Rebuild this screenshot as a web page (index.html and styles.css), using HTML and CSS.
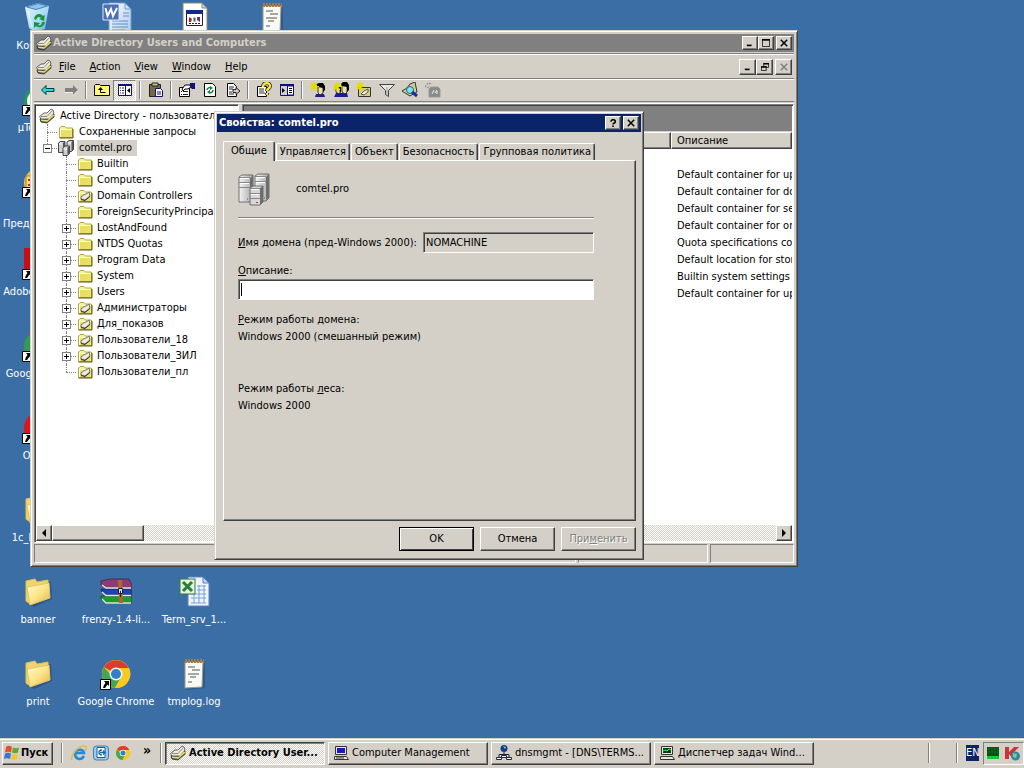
FILE: index.html
```html
<!DOCTYPE html>
<html lang="ru">
<head>
<meta charset="utf-8">
<title>Active Directory Users and Computers</title>
<link rel="stylesheet" href="styles.css">
</head>
<body>
<svg class="sprites" aria-hidden="true">
  <defs>
    <linearGradient id="g-folder" x1="0" y1="0" x2="1" y2="1"><stop offset="0" stop-color="#fffbd0"/><stop offset=".5" stop-color="#fbe58a"/><stop offset="1" stop-color="#e2b545"/></linearGradient>
    <linearGradient id="g-bin" x1="0" y1="0" x2="1" y2="1"><stop offset="0" stop-color="#e8f8ff"/><stop offset=".6" stop-color="#a8daf4"/><stop offset="1" stop-color="#5aa6da"/></linearGradient>
    <linearGradient id="g-page" x1="0" y1="0" x2="1" y2="1"><stop offset="0" stop-color="#fff"/><stop offset="1" stop-color="#a9c8ee"/></linearGradient>
    <linearGradient id="g-srv" x1="0" y1="0" x2="1" y2="0"><stop offset="0" stop-color="#f4f4f4"/><stop offset="1" stop-color="#a8a8a8"/></linearGradient>
  </defs>
  <symbol id="i-shortcut" viewBox="0 0 11 11"><path fill="#fff" stroke="#000" d="M.5.5h10v10H.5z"/><path d="M4 2h5v5L7.500 5.500 5 9H3l1-3 1.500-2z"/></symbol>
  <symbol id="i-bin" viewBox="0 0 32 32"><path d="M3 5l13-4 11 3-4 23-10 3-6-4z" fill="url(#g-bin)"/><path d="M3 5l13-4 11 3-13 4z" fill="#3f7fb2"/><path d="M6 5l10-3 8 2-10 3z" fill="#8ec6e8"/><path d="M6 9l4 16" stroke="#fff" opacity=".7"/><path d="M12 17c1-6 7-6 9-3l2-1-1 6-5-2 2-1c-2-2-4-1-5 2zM23 20c-1 6-7 6-9 4l-2 2v-6l6 1-2 2c2 1 4 0 4-3z" fill="#199338"/></symbol>
  <symbol id="i-word" viewBox="0 0 32 32"><path d="M9 1h16l6 6v25H9z" fill="url(#g-page)" stroke="#7399cf"/><path d="M25 1v6h6z" fill="#cfe0f6" stroke="#7399cf"/><path d="M12 19h16M12 22h16M12 25h16M12 28h13M23 11h6M23 14h6" stroke="#6d8cc4"/><path d="M3 2h16v16H3z" fill="#4a6fb8" stroke="#dbe6f8"/><path d="M5.500 6l2 8L11 7l2 7 4-8" fill="none" stroke="#fff" stroke-width="2"/></symbol>
  <symbol id="i-reg" viewBox="0 0 32 32"><path d="M5 1h19l5 5v26H5z" fill="#fff" stroke="#8a8a80"/><path d="M24 1v5h5z" fill="#ccc" stroke="#888"/><path d="M8.500 9.500h16v14h-16z" fill="#fff" stroke="#222"/><path d="M8 8h17v4H8z" fill="#112a86"/><path d="M11 15l3 2-1 3h-2z" fill="#c01828"/><path d="M15.500 15.500h2v4h-2z" fill="#167f38"/><path d="M19 15h3v5l-3-2z" fill="#8a2090"/><path d="M11 21.500h11" stroke="#223" stroke-dasharray="2 1"/></symbol>
  <symbol id="i-note" viewBox="0 0 32 32"><path d="M8 5h19v25l-19 2z" fill="#24466e" opacity=".5"/><path d="M7 4h18l-1 25-17 1z" fill="#fafaf4" stroke="#9a9a90"/><path d="M7 3h19" stroke="#a67b42" stroke-width="4" stroke-dasharray="2 1"/><path d="M10 9h7M14 12h8M10 16h11M12 19h6M10 24h4" stroke="#555"/></symbol>
  <symbol id="i-dfolder" viewBox="0 0 32 32"><path d="M6 8l9-2 14 0 1 17-18 8-6-3z" fill="#233e68" opacity=".5"/><path d="M4 5l9-2 2 3 11-2v18L8 28l-4-3z" fill="#f0d470" stroke="#e0bd55"/><path d="M5 11l22-4 1 15L8 29z" fill="url(#g-folder)" stroke="#e6c35a"/></symbol>
  <symbol id="i-rar" viewBox="0 0 32 32"><g stroke="#222" stroke-width=".6"><path d="M1 5l9-2h19l3 6v3H6l-5-3z" fill="#8e3a78"/><path d="M1 13h27l4 1v5H6l-5-4z" fill="#1c42b4"/><path d="M1 20h27l4 1v6H6l-5-4z" fill="#1c9a2c"/></g><path d="M2 9l4 3h25M2 16l4 3.500h25M2 23l4 4h25" fill="none" stroke="#e4e4e4" stroke-width="1.300"/><path d="M18 4h4l1 23h-4z" fill="#ac692e"/><path d="M18.500 12.500h4v5h-4z" fill="#ddd" stroke="#222"/><path d="M20.500 15v6" stroke="#222"/></symbol>
  <symbol id="i-excel" viewBox="0 0 32 32"><path d="M10 1h15l6 6v23H10z" fill="#eff5ff" stroke="#5c80be"/><path d="M25 1v6h6z" fill="#bcd3f3" stroke="#5c80be"/><path d="M13 18h15M13 22h15M13 27h15M16 15v12M21 9v18M26 9v18M19 10h9M19 14h9" stroke="#7da0d8"/><rect x="2" y="3" width="15" height="15" fill="#e3f1df" stroke="#2e7c3a"/><path d="M5 6l9 9M14 6l-9 9" stroke="#2b7e39" stroke-width="3"/></symbol>
  <symbol id="i-chrome" viewBox="0 0 32 32"><circle cx="16" cy="16" r="14" fill="#f9c920"/><path d="M16 16L3.900 9A14 14 0 0 1 28.500 10H16z" fill="#df3b2d"/><path d="M3.900 9A14 14 0 0 0 15 30l6-11-5-3-4 2z" fill="#46a650"/><path d="M16 10h13A14 14 0 0 1 15 30l6-11z" fill="#f9c920"/><circle cx="16" cy="16" r="6.500" fill="#f4f7fa"/><circle cx="16" cy="16" r="5" fill="#337ec6"/></symbol>
  <symbol id="i-ut" viewBox="0 0 32 32"><circle cx="16" cy="17" r="14" fill="#1c9b58"/><circle cx="16" cy="17" r="11" fill="#f0f6f0"/><path d="M11 10v10c0 5 9 5 9 0V10" fill="none" stroke="#1c9b58" stroke-width="4"/></symbol>
  <symbol id="i-1c" viewBox="0 0 32 32"><circle cx="16" cy="17" r="14" fill="#f2c13e"/><path d="M4 10h22v16H4z" fill="#f7dd7b" stroke="#b77628"/><path d="M6 14h8M6 19h8" stroke="#c62b28" stroke-width="2"/></symbol>
  <symbol id="i-adobe" viewBox="0 0 32 32"><path d="M2 0h28v32H2z" fill="#c40f14"/><path d="M8 24c6-4 8-12 7-17 4 10 7 12 11 12-8 0-13 2-18 5z" fill="none" stroke="#fff" stroke-width="2"/></symbol>
  <symbol id="i-earth" viewBox="0 0 32 32"><circle cx="16" cy="16" r="14" fill="#329b52"/><path d="M16 16L6 4h20z" fill="#da3d2e"/></symbol>
  <symbol id="i-opera" viewBox="0 0 32 32"><ellipse cx="16" cy="16" rx="14" ry="15" fill="#e0141c"/><ellipse cx="17" cy="16" rx="5" ry="10" fill="#fff"/></symbol>
  <symbol id="i-book" viewBox="0 0 16 16"><path d="M1 11l5-4 9-1v3l-7 6-6-1z" fill="#6a6a60" stroke="#222" stroke-width=".8"/><path d="M2 12l6 1 7-6" fill="none" stroke="#e8e070" stroke-width="1.300"/><path d="M.500 8.500L5 5h3l4-4 2 1 1 3-5 6-8 0z" fill="#eceade" stroke="#444" stroke-width=".8"/><path d="M2 8.500h6L13 3" fill="none" stroke="#8d8b80"/><path d="M9 11l5-5v1.500L10 12z" fill="#e3d34e"/></symbol>
  <symbol id="i-folder" viewBox="0 0 16 16"><path d="M1.500 13.500V4L3 2.500h4L8.500 4h6v9.500z" fill="#f6f0a0" stroke="#b5aa3c"/><path d="M2.500 6h11v7h-11z" fill="#e9df62"/><path d="M3 5.500h10.500M2.500 5v8" stroke="#fffce0" fill="none"/><path d="M1.500 14h13.500V5" stroke="#5a551c" fill="none"/></symbol>
  <symbol id="i-ou" viewBox="0 0 16 16"><use href="#i-folder" width="16" height="16"/><path d="M4 9l4-3h1l3-2 1 4-5 4-4-1z" fill="#e9e9e1" stroke="#555" stroke-width=".8"/><path d="M4 11.500l4 1 5-4" stroke="#333" fill="none"/></symbol>
  <symbol id="i-servers" viewBox="0 0 32 32"><g stroke="#555" stroke-width=".8"><path d="M1 4l3-2h11v24l-3 3H1z" fill="url(#g-srv)"/><path d="M17 3l3-2h11v24l-3 3H17z" fill="url(#g-srv)"/><path d="M12 15l3-2h10v16l-3 3H12z" fill="#d7d7d7"/></g><path d="M12 5v10l3-2V3zM28 4v23l3-3V1zM22 15v17l3-3V13z" fill="#6e6e6e"/><path d="M1 4.500h11M1 9.500h11M1 14.500h11M17 3.500h11M17 8.500h11M12 15.500h10M12 20.500h10M12 25.500h10" stroke="#888"/><path d="M2 5.500h9M2 10.500h9M18 4.500h9M18 9.500h9M13 16.500h8M13 21.500h8" stroke="#fff"/><path d="M18 29.500h2M9 26h1M26 25h1" stroke="#d03030"/></symbol>
  <symbol id="i-domain" viewBox="0 0 16 16"><g fill="#cfcfcf" stroke="#333" stroke-width=".9"><path d="M.5 3l2-1.500h4.500v9l-2 2H.5z"/><path d="M9 2l2-1.500h4.500v9l-2 2H9z"/><path d="M5 7.500L7 6h4.500v7.500l-2 2H5z"/></g><path d="M5 3l2-1.500V6L5 7.500zM13.500 2l2-1.500v9l-2 2zM9.500 7.500l2-1.500v7.500l-2 2z" fill="#555"/><path d="M1 4h3M10 3h3M5.500 9H9" stroke="#fff"/></symbol>
  <symbol id="i-back" viewBox="0 0 16 16"><path d="M1.500 8L6 3.500v3h8v3H6v3z" fill="#24d8dc" stroke="#003c3c"/></symbol>
  <symbol id="i-fwd" viewBox="0 0 16 16"><path d="M15 8l-5-5v3H2v4h8v3z" fill="#808080"/><path d="M15 8.500L10 13.500M2 10.500h8" stroke="#fff" stroke-width=".7"/></symbol>
  <symbol id="i-up" viewBox="0 0 16 16"><path d="M.5 13.500v-10l1-1h4l1 1h9v10z" fill="#fff67b" stroke="#000"/><path d="M6.500 7v3.500h5" fill="none" stroke="#000"/><path d="M4 8h5L6.500 5z"/></symbol>
  <symbol id="i-tree" viewBox="0 0 16 16"><path d="M1.500 2.500h13v11h-13z" fill="#fff" stroke="#10107c"/><path d="M1 2h14v2H1zM8 3h1v11H8z" fill="#10107c"/><path d="M3 6h4M3 8.500h4M3 11h4" stroke="#333" stroke-dasharray="1 1 2 0"/><path d="M13 6v5L10 8.500z"/></symbol>
  <symbol id="i-panel" viewBox="0 0 16 16"><path d="M1.500 2.500h13v11h-13z" fill="#d4d0c8" stroke="#10107c"/><path d="M1 2h14v2H1z" fill="#10107c"/><path d="M8.500 4h6v9h-6z" fill="#fff" stroke="#10107c"/><path d="M3 6v5l3-2.500z"/><path d="M10 6.500h3M10 8.500h3M10 10.500h3" stroke="#000"/></symbol>
  <symbol id="i-paste" viewBox="0 0 16 16"><path d="M1.500 2.500h11v12h-11z" fill="#706b46" stroke="#222"/><path d="M4 1h6v3H4z" fill="#c9c384" stroke="#222"/><path d="M7.500 6.500h5l2 2v6h-7z" fill="#fff" stroke="#10107c"/><path d="M9 10h4M9 12h4" stroke="#10107c"/></symbol>
  <symbol id="i-props" viewBox="0 0 16 16"><path d="M.5 5.500h10v9H.5z" fill="#fff" stroke="#000"/><path d="M2 9.500h1M2 12.500h1M4 9.500h5M4 12.500h5" stroke="#222"/><path d="M3 7l3-4h5l1 2-3 2H6L4 9z" fill="#fff" stroke="#000"/><path d="M11 1h5v6h-3l-2-2z" fill="#10107c"/></symbol>
  <symbol id="i-refresh" viewBox="0 0 16 16"><path d="M2.500 1.500h8l3 3v10h-11z" fill="#fff" stroke="#000"/><path d="M5 8c0-2 3-3 4-2M11 8c0 3-3 3-4 2" fill="none" stroke="#12853a" stroke-width="1.500"/><path d="M8 4l3 2-3 2zM8 8v4l-3-2z" fill="#12853a"/></symbol>
  <symbol id="i-export" viewBox="0 0 16 16"><path d="M2.500 1.500h6l3 3v10h-9z" fill="#fff" stroke="#000"/><path d="M4 5h5M4 7h4M4 10h3M4 12h5" stroke="#222"/><path d="M8 7.500h3v-2l4 3.500-4 3.500v-2H8z" fill="#ccc" stroke="#222"/></symbol>
  <symbol id="i-help" viewBox="0 0 16 16"><path d="M1.500 4.500h9v10h-9z" fill="#fff" stroke="#000"/><path d="M3 7h5M3 9h5M3 11h6" stroke="#333"/><path d="M7 5c0-5 7-5 7-1 0 3-3 2-3 5M11 11v2" stroke="#333" fill="none" stroke-width="4"/><path d="M7 5c0-5 7-5 7-1 0 3-3 2-3 5M11 11v2" stroke="#ffe932" fill="none" stroke-width="2.200"/></symbol>
  <symbol id="i-star" viewBox="0 0 16 16"><path d="M4 0v9M0 4.500h9M1 1l6 7M7 1L1 8" stroke="#e6d800" stroke-width="1.200"/></symbol>
  <symbol id="i-user" viewBox="0 0 16 16"><path d="M5 15l1-3h8l1 3z" fill="#1c1c90"/><path d="M8 4h5v7l-3 2-2-2z" fill="#e9dfaf" stroke="#111" stroke-width=".8"/><path d="M6 2l3-1h4l2 3v4l-2 2V6L8 5z"/><use href="#i-star" width="16" height="16"/></symbol>
  <symbol id="i-users" viewBox="0 0 16 16"><path d="M1 15l2-4h11l1 4z" fill="#1c1c90"/><path d="M3 5h4v6l-1 1-3-2zM9 3h5v7l-2 2-3-2z" fill="#e9dfaf" stroke="#111" stroke-width=".8"/><path d="M8 2l2-2h4l2 3v5l-2 2V5l-5-1zM5 4l3 1v6l-2-4z"/><use href="#i-star" width="16" height="16"/></symbol>
  <symbol id="i-newou" viewBox="0 0 16 16"><path d="M2.500 5.500h12v9h-12z" fill="#d5cf80" stroke="#333"/><path d="M5 12l3-3 4-2v3l-4 3z" fill="#eee" stroke="#555"/><use href="#i-star" width="16" height="16"/></symbol>
  <symbol id="i-filter" viewBox="0 0 16 16"><path d="M.5 2.500h15L9.500 8.500v6l-3-2v-4z" fill="#e8e8e8" stroke="#444"/><path d="M8 5v8" stroke="#999"/></symbol>
  <symbol id="i-find" viewBox="0 0 16 16"><path d="M0 9l5-3 3-4 5-2 2 10-7 4z" fill="#cfcf94" stroke="#333"/><circle cx="8" cy="8" r="3.500" fill="#7fe2ec" stroke="#17707c"/><path d="M10 10l5 4" stroke="#1830a0" stroke-width="3"/></symbol>
  <symbol id="i-dis" viewBox="0 0 16 16"><path d="M4 15V7l2-2h7l2 2v8z" fill="#8a8a8a" stroke="#999"/><path d="M0 5l3-4 4 1M2 6l3-2" stroke="#999" stroke-dasharray="2 1" fill="none" stroke-width="1.500"/><path d="M7 12l2-4M10 11l2-3M12 12v-3" stroke="#eee"/></symbol>
  <symbol id="i-min" viewBox="0 0 10 10"><path d="M1 8h6" stroke="#000" stroke-width="2"/></symbol>
  <symbol id="i-max" viewBox="0 0 10 10"><path d="M.5 1h9v8.500h-9z" fill="none" stroke="#000"/><path d="M0 1h10" stroke="#000" stroke-width="2"/></symbol>
  <symbol id="i-restore" viewBox="0 0 10 10"><path d="M3.500 4V.5h6v5H7M.5 4.500h6v5h-6z" fill="none" stroke="#000"/><path d="M3 1h7M0 5h7" stroke="#000" stroke-width="2"/></symbol>
  <symbol id="i-x" viewBox="0 0 10 10"><path d="M1 1l8 8M9 1L1 9" stroke="currentColor" stroke-width="1.900"/></symbol>
  <symbol id="i-q" viewBox="0 0 10 10"><path d="M2.500 3.500c0-3.500 5.500-3.500 5.500 0 0 1.500-3 1.500-3 3.500M5 8v2" fill="none" stroke="#000" stroke-width="2"/></symbol>
  <symbol id="i-left" viewBox="0 0 8 8"><path d="M6 0v8L2 4z"/></symbol>
  <symbol id="i-right" viewBox="0 0 8 8"><path d="M2 0v8l4-4z"/></symbol>
  <symbol id="i-win" viewBox="0 0 16 16"><path d="M2 2c2-2 4-1 6 0L7 7.500C5 6.500 3 6.500 1 7.500z" fill="#e5502a"/><path d="M9 2.500c2 1 4 1 6 0l-1 5c-2 1-4 1-6 0z" fill="#5ba938"/><path d="M1 8.500c2-1 4-1 6 0l-1 5.500c-2-1-4-1-6 0z" fill="#3c74d4"/><path d="M8 9c2 1 4 1 6 0l-1 5c-2 1-4 1-6 0z" fill="#f5c32c"/></symbol>
  <symbol id="i-ie" viewBox="0 0 16 16"><path d="M13 11c-3 5-9 3-9-2s8-6 9-1H4" fill="none" stroke="#2389d8" stroke-width="2.500"/><path d="M1 15C-1 10 9 0 14 1c3 1 0 5 0 5" fill="none" stroke="#e8b83c" stroke-width="1.300"/></symbol>
  <symbol id="i-outlook" viewBox="0 0 16 16"><rect x=".5" y="1" width="15" height="14" rx="3" fill="#9ccbee" stroke="#3c80ba"/><path d="M4 2.500h8v10H4z" fill="#fff" stroke="#1c5c9a"/><path d="M9 5c-4 0-4 5 0 5M7 7.500h5M10 5.500l2 2-2 2" fill="none" stroke="#1d66aa" stroke-width="1.300"/></symbol>
  <symbol id="i-pc" viewBox="0 0 16 16"><path d="M2.500 1.500h11v8h-11z" fill="#e9e6de" stroke="#333"/><path d="M4 3h8v5H4z" fill="#1818c0"/><path d="M1.500 11.500h12l2 3h-14z" fill="#e9e6de" stroke="#333"/><path d="M3 13h8" stroke="#333"/></symbol>
  <symbol id="i-dns" viewBox="0 0 16 16"><circle cx="8" cy="3.500" r="3.500" fill="#1c3c80"/><path d="M7 1l3 1-1 2z" fill="#6fd4e4"/><path d="M8 7v4M3 12V9.500h10V12" fill="none" stroke="#223"/><path d="M.5 12.500h5v2h-5zM10.500 12.500h5v2h-5zM5.500 10.500h5v2h-5z" fill="#fff" stroke="#20206c"/></symbol>
  <symbol id="i-taskmgr" viewBox="0 0 16 16"><path d="M2.500 1.500h11v8h-11z" fill="#e9e6de" stroke="#333"/><path d="M4 3h8v5H4z" fill="#063a12"/><path d="M4 6l2-1 2 1 2-2 2 1" fill="none" stroke="#2aff50"/><path d="M1.500 11.500h12l2 3h-14z" fill="#e9e6de" stroke="#333"/></symbol>
  <symbol id="i-cpu" viewBox="0 0 12 12"><path d="M0 0h12v12H0z" fill="#0a4a12"/><path d="M0 9h12v3H0z" fill="#18e030"/><path d="M0 2h12M0 5h12M2 0v12M5 0v12M8 0v12M11 0v12" stroke="#0d7a20" stroke-width=".6"/></symbol>
  <symbol id="i-kav" viewBox="0 0 16 16"><path d="M1 2h4v5l5-5h5L9 8l5 6H9L5 9v5H1z" fill="#cf3138"/><circle cx="11.500" cy="11" r="4.500" fill="#2f87b0"/><path d="M9 8l4 1-1 4-3-1z" fill="#7fd06d"/></symbol>
</svg>

<main class="desktop">
  <ul class="shortcuts">
    <li class="shortcut c1 r1"><svg><use href="#i-bin"/></svg><span>Корзина</span></li>
    <li class="shortcut c2 r1"><svg><use href="#i-word"/></svg></li>
    <li class="shortcut c3 r1"><svg><use href="#i-reg"/></svg></li>
    <li class="shortcut c4 r1"><svg><use href="#i-note"/></svg></li>
    <li class="shortcut c1 r2"><div class="pic"><svg><use href="#i-ut"/></svg><svg class="arrow"><use href="#i-shortcut"/></svg></div><span>µTorrent</span></li>
    <li class="shortcut c1 r3"><div class="pic"><svg><use href="#i-1c"/></svg><svg class="arrow"><use href="#i-shortcut"/></svg></div><span><br>Предприятие</span></li>
    <li class="shortcut c1 r4"><div class="pic"><svg><use href="#i-adobe"/></svg><svg class="arrow"><use href="#i-shortcut"/></svg></div><span>Adobe Reader</span></li>
    <li class="shortcut c1 r5"><div class="pic"><svg><use href="#i-earth"/></svg><svg class="arrow"><use href="#i-shortcut"/></svg></div><span>Google Earth</span></li>
    <li class="shortcut c1 r6"><div class="pic"><svg><use href="#i-opera"/></svg><svg class="arrow"><use href="#i-shortcut"/></svg></div><span>Opera</span></li>
    <li class="shortcut c1 r7"><svg><use href="#i-dfolder"/></svg><span>1c_backup</span></li>
    <li class="shortcut c1 r8"><svg><use href="#i-dfolder"/></svg><span>banner</span></li>
    <li class="shortcut c2 r8"><svg><use href="#i-rar"/></svg><span>frenzy-1.4-li...</span></li>
    <li class="shortcut c3 r8"><svg><use href="#i-excel"/></svg><span>Term_srv_1...</span></li>
    <li class="shortcut c1 r9"><svg><use href="#i-dfolder"/></svg><span>print</span></li>
    <li class="shortcut c2 r9"><div class="pic"><svg><use href="#i-chrome"/></svg><svg class="arrow"><use href="#i-shortcut"/></svg></div><span>Google Chrome</span></li>
    <li class="shortcut c3 r9"><svg><use href="#i-note"/></svg><span>tmplog.log</span></li>
  </ul>

  <section class="window console" aria-label="Active Directory Users and Computers">
    <header class="titlebar inactive">
      <svg class="ico"><use href="#i-book"/></svg>
      <h1>Active Directory Users and Computers</h1>
      <div class="captions">
        <button class="cap" aria-label="Minimize"><svg><use href="#i-min"/></svg></button><button class="cap" aria-label="Maximize"><svg><use href="#i-max"/></svg></button><button class="cap apart" aria-label="Close"><svg><use href="#i-x"/></svg></button>
      </div>
    </header>
    <nav class="band menubar">
      <svg class="ico"><use href="#i-book"/></svg>
      <button class="menu"><u>F</u>ile</button><button class="menu"><u>A</u>ction</button><button class="menu"><u>V</u>iew</button><button class="menu"><u>W</u>indow</button><button class="menu"><u>H</u>elp</button>
      <div class="captions">
        <button class="cap" aria-label="Minimize view"><svg><use href="#i-min"/></svg></button><button class="cap" aria-label="Restore view"><svg><use href="#i-restore"/></svg></button><button class="cap apart" aria-label="Close view" disabled><svg><use href="#i-x"/></svg></button>
      </div>
    </nav>
    <div class="band toolbar" role="toolbar">
      <button class="tool" aria-label="Back"><svg><use href="#i-back"/></svg></button><button class="tool" aria-label="Forward"><svg><use href="#i-fwd"/></svg></button><i class="sep"></i>
      <button class="tool" aria-label="Up"><svg><use href="#i-up"/></svg></button><button class="tool pressed" aria-label="Tree"><svg><use href="#i-tree"/></svg></button><i class="sep"></i>
      <button class="tool" aria-label="Paste"><svg><use href="#i-paste"/></svg></button><i class="sep"></i>
      <button class="tool" aria-label="Properties"><svg><use href="#i-props"/></svg></button><button class="tool" aria-label="Refresh"><svg><use href="#i-refresh"/></svg></button><button class="tool" aria-label="Export"><svg><use href="#i-export"/></svg></button><i class="sep"></i>
      <button class="tool" aria-label="Help"><svg><use href="#i-help"/></svg></button><button class="tool" aria-label="Panel"><svg><use href="#i-panel"/></svg></button><i class="sep"></i>
      <button class="tool" aria-label="New user"><svg><use href="#i-user"/></svg></button><button class="tool" aria-label="New group"><svg><use href="#i-users"/></svg></button><button class="tool" aria-label="New unit"><svg><use href="#i-newou"/></svg></button><button class="tool" aria-label="Filter"><svg><use href="#i-filter"/></svg></button><button class="tool" aria-label="Find"><svg><use href="#i-find"/></svg></button><button class="tool" aria-label="Add to group"><svg><use href="#i-dis"/></svg></button>
    </div>
    <div class="panes">
      <div class="treepane">
        <ul class="tree">
          <li class="node"><svg class="ico"><use href="#i-book"/></svg><span>Active Directory - пользователи</span></li>
          <li class="node d1"><i class="branch"></i><svg class="ico"><use href="#i-folder"/></svg><span>Сохраненные запросы</span></li>
          <li class="node d1"><i class="branch last"><button class="exp minus" aria-label="Collapse"></button></i><svg class="ico"><use href="#i-domain"/></svg><span class="selected">comtel.pro</span></li>
          <li class="node d2"><i class="branch"></i><svg class="ico"><use href="#i-folder"/></svg><span>Builtin</span></li>
          <li class="node d2"><i class="branch"></i><svg class="ico"><use href="#i-folder"/></svg><span>Computers</span></li>
          <li class="node d2"><i class="branch"></i><svg class="ico"><use href="#i-ou"/></svg><span>Domain Controllers</span></li>
          <li class="node d2"><i class="branch"></i><svg class="ico"><use href="#i-folder"/></svg><span>ForeignSecurityPrincipals</span></li>
          <li class="node d2"><i class="branch"><button class="exp" aria-label="Expand"></button></i><svg class="ico"><use href="#i-folder"/></svg><span>LostAndFound</span></li>
          <li class="node d2"><i class="branch"><button class="exp" aria-label="Expand"></button></i><svg class="ico"><use href="#i-folder"/></svg><span>NTDS Quotas</span></li>
          <li class="node d2"><i class="branch"><button class="exp" aria-label="Expand"></button></i><svg class="ico"><use href="#i-folder"/></svg><span>Program Data</span></li>
          <li class="node d2"><i class="branch"><button class="exp" aria-label="Expand"></button></i><svg class="ico"><use href="#i-folder"/></svg><span>System</span></li>
          <li class="node d2"><i class="branch"><button class="exp" aria-label="Expand"></button></i><svg class="ico"><use href="#i-folder"/></svg><span>Users</span></li>
          <li class="node d2"><i class="branch"><button class="exp" aria-label="Expand"></button></i><svg class="ico"><use href="#i-ou"/></svg><span>Администраторы</span></li>
          <li class="node d2"><i class="branch"><button class="exp" aria-label="Expand"></button></i><svg class="ico"><use href="#i-ou"/></svg><span>Для_показов</span></li>
          <li class="node d2"><i class="branch"><button class="exp" aria-label="Expand"></button></i><svg class="ico"><use href="#i-ou"/></svg><span>Пользователи_18</span></li>
          <li class="node d2"><i class="branch"><button class="exp" aria-label="Expand"></button></i><svg class="ico"><use href="#i-ou"/></svg><span>Пользователи_ЗИЛ</span></li>
          <li class="node d2"><i class="branch last"></i><svg class="ico"><use href="#i-ou"/></svg><span>Пользователи_пл</span></li>
        </ul>
        <div class="scroll"><button class="arrowbtn" aria-label="Scroll left"><svg><use href="#i-left"/></svg></button><div class="thumb"></div></div>
      </div>
      <div class="listpane">
        <div class="banner"></div>
        <div class="listbox">
          <table class="list">
            <colgroup><col><col class="desc"></colgroup>
            <thead><tr><th></th><th>Описание</th></tr></thead>
            <tbody>
              <tr><td></td><td></td></tr>
              <tr><td></td><td>Default container for upgraded computers</td></tr>
              <tr><td></td><td>Default container for domain controllers</td></tr>
              <tr><td></td><td>Default container for security identifiers</td></tr>
              <tr><td></td><td>Default container for orphaned objects</td></tr>
              <tr><td></td><td>Quota specifications container</td></tr>
              <tr><td></td><td>Default location for storage</td></tr>
              <tr><td></td><td>Builtin system settings</td></tr>
              <tr><td></td><td>Default container for upgraded users</td></tr>
            </tbody>
          </table>
          <div class="scroll"><button class="arrowbtn end" aria-label="Scroll right"><svg><use href="#i-right"/></svg></button></div>
        </div>
      </div>
    </div>
    <footer class="status"><div class="cell grow"></div><div class="cell mid"></div><div class="cell small"></div></footer>
  </section>

  <section class="window props" role="dialog" aria-label="Свойства: comtel.pro">
    <header class="titlebar">
      <h2>Свойства: comtel.pro</h2>
      <div class="captions"><button class="cap" aria-label="Help"><svg><use href="#i-q"/></svg></button><button class="cap apart" aria-label="Close"><svg><use href="#i-x"/></svg></button></div>
    </header>
    <div class="sheet">
      <div class="tabs" role="tablist">
        <button class="tab active" role="tab" aria-selected="true">Общие</button><button class="tab" role="tab">Управляется</button><button class="tab" role="tab">Объект</button><button class="tab" role="tab">Безопасность</button><button class="tab" role="tab">Групповая политика</button>
      </div>
      <div class="panel" role="tabpanel">
        <div class="head"><svg><use href="#i-servers"/></svg><span>comtel.pro</span></div>
        <div class="field"><label for="nt"><u>И</u>мя домена (пред-Windows 2000):</label><input id="nt" type="text" value="NOMACHINE" readonly></div>
        <div class="stack"><label for="descr"><u>О</u>писание:</label><div class="edit"><input id="descr" type="text"><i class="caret"></i></div></div>
        <dl class="mode"><dt><u>Р</u>ежим работы домена:</dt><dd>Windows 2000 (смешанный режим)</dd></dl>
        <dl class="mode forest"><dt>Режим работы <u>л</u>еса:</dt><dd>Windows 2000</dd></dl>
      </div>
      <div class="actions"><button class="btn default">OK</button><button class="btn">Отмена</button><button class="btn" disabled>При<u>м</u>енить</button></div>
    </div>
  </section>
</main>

<footer class="taskbar">
  <button class="start"><svg class="ico"><use href="#i-win"/></svg>Пуск</button>
  <i class="grip"></i>
  <div class="quick">
    <button aria-label="Internet Explorer"><svg class="ico"><use href="#i-ie"/></svg></button><button aria-label="Outlook Express"><svg class="ico"><use href="#i-outlook"/></svg></button><button aria-label="Google Chrome"><svg class="ico"><use href="#i-chrome"/></svg></button><button class="more" aria-label="More">»</button>
  </div>
  <i class="grip tight"></i>
  <div class="tasks">
    <button class="task current"><svg class="ico"><use href="#i-book"/></svg><span>Active Directory User...</span></button>
    <button class="task"><svg class="ico"><use href="#i-pc"/></svg><span>Computer Management</span></button>
    <button class="task"><svg class="ico"><use href="#i-dns"/></svg><span>dnsmgmt - [DNS\TERMS...</span></button>
    <button class="task"><svg class="ico"><use href="#i-taskmgr"/></svg><span>Диспетчер задач Wind...</span></button>
  </div>
  <i class="grip"></i><i class="grip far"></i>
  <button class="lang">EN</button>
  <div class="tray"><svg class="cpu"><use href="#i-cpu"/></svg><svg class="ico"><use href="#i-kav"/></svg></div>
</footer>
</body>
</html>
```
FILE: styles.css
```css
:root {
  --face: #d4d0c8;
  --dark: #404040;
  --shadow: #808080;
  --navy: #0a246a;
  --dither: repeating-conic-gradient(#fff 0 25%, #d4d0c8 0 50%) 0 0 / 2px 2px;
}
* { box-sizing: border-box; }
body {
  margin: 0;
  height: 100vh;
  display: flex;
  flex-direction: column;
  overflow: hidden;
  background: #3a6ea5;
  color: #000;
  font: 11px/14px Tahoma, "DejaVu Sans Condensed", "DejaVu Sans", sans-serif;
}
button, input {
  font: inherit;
  color: inherit;
  margin: 0;
  padding: 0;
  border: 0;
  border-radius: 0;
  background: none;
}
ul, dl, dd, h1, h2 { margin: 0; padding: 0; list-style: none; font: inherit; }
svg { display: block; flex: none; }
.sprites { position: absolute; width: 0; height: 0; }
.ico { width: 16px; height: 16px; }

/* Desktop */
.desktop { position: relative; flex: 1; min-height: 0; }
.shortcuts {
  display: grid;
  grid-template-columns: 76px 80px 76px 80px;
  grid-template-rows: repeat(9, 82px);
  padding-top: 2px;
}
.shortcut {
  display: flex;
  flex-direction: column;
  align-items: center;
  gap: 5px;
  color: #fff;
  text-align: center;
  white-space: nowrap;
}
.shortcut svg { width: 32px; height: 32px; }
.pic { position: relative; }
.shortcut .arrow { position: absolute; left: 0; bottom: 0; width: 11px; height: 11px; }
.c1 { grid-column: 1; } .c2 { grid-column: 2; } .c3 { grid-column: 3; } .c4 { grid-column: 4; }
.r1 { grid-row: 1; } .r2 { grid-row: 2; } .r3 { grid-row: 3; } .r4 { grid-row: 4; } .r5 { grid-row: 5; }
.r6 { grid-row: 6; } .r7 { grid-row: 7; } .r8 { grid-row: 8; } .r9 { grid-row: 9; }

/* Windows */
.window {
  position: absolute;
  display: flex;
  flex-direction: column;
  background: var(--face);
  border: 1px solid;
  border-color: var(--face) var(--dark) var(--dark) var(--face);
  box-shadow: inset 1px 1px #fff, inset -1px -1px var(--shadow);
}
.console { left: 30px; top: 30px; bottom: 171px; width: 75vw; padding: 3px; }
.props { left: 214px; top: 111px; width: 430px; padding: 2px; }
.titlebar {
  display: flex;
  align-items: center;
  height: 18px;
  padding: 0 2px;
  background: var(--navy);
  color: #fff;
  font-weight: bold;
}
.titlebar.inactive { gap: 1px; background: var(--shadow); color: var(--face); }
.captions { display: flex; margin-left: auto; }
.cap {
  display: grid;
  place-items: center;
  width: 16px;
  height: 14px;
  background: var(--face);
  color: #000;
  border: 1px solid;
  border-color: #fff var(--dark) var(--dark) #fff;
  box-shadow: inset -1px -1px var(--shadow);
}
.cap svg { width: 8px; height: 8px; }
.cap.apart { margin-left: 2px; }
.cap:disabled { color: var(--shadow); }
.band {
  display: flex;
  align-items: center;
  border-top: 1px solid var(--shadow);
  box-shadow: inset 0 1px #fff;
  padding: 1px 2px 0;
}
.menubar { margin-top: 1px; height: 25px; }
.menu { padding: 2px 7px; }
.menubar .cap { height: 16px; width: 17px; }
.toolbar { height: 24px; padding-top: 0; margin-bottom: 1px; border-bottom: 1px solid var(--shadow); }
.tool { display: grid; place-items: center; width: 23px; height: 21px; }
.tool svg { width: 16px; height: 16px; }
.tool.pressed {
  background: var(--dither);
  border: 1px solid;
  border-color: var(--shadow) #fff #fff var(--shadow);
}
.sep { width: 2px; height: 18px; margin: 0 3px; border-left: 1px solid var(--shadow); border-right: 1px solid #fff; }

/* Panes */
.panes { flex: 1; min-height: 0; display: grid; grid-template-columns: 205px minmax(0, 1fr); gap: 3px; border-top: 1px solid #fff; }
.treepane, .listpane {
  display: flex;
  flex-direction: column;
  min-width: 0;
  background: #fff;
  border: 1px solid;
  border-color: var(--shadow) #fff #fff var(--shadow);
  box-shadow: inset 1px 1px var(--dark);
  padding: 2px 1px 1px;
}
.tree { flex: 1; overflow: hidden; padding: 1px 0 0 3px; }
.node { display: flex; height: 16px; white-space: nowrap; }
.node span { padding: 1px 2px; margin-left: 3px; }
.node .selected { background: var(--face); padding-right: 5px; }
.d2 { padding-left: 19px; }
.d2 span { padding-left: 1px; }
.branch { position: relative; display: grid; align-items: center; width: 19px; height: 16px; padding-left: 4px; }
.branch::before { content: ""; position: absolute; left: 8px; top: 0; bottom: 0; border-left: 1px dotted var(--shadow); }
.branch.last::before { bottom: 8px; }
.branch::after { content: ""; position: absolute; left: 8px; right: 1px; top: 8px; border-top: 1px dotted var(--shadow); }
.exp {
  position: relative;
  z-index: 1;
  width: 9px;
  height: 9px;
  border: 1px solid var(--shadow);
  background:
    linear-gradient(#000, #000) center / 5px 1px no-repeat,
    linear-gradient(#000, #000) center / 1px 5px no-repeat, #fff;
}
.exp.minus { background: linear-gradient(#000, #000) center / 5px 1px no-repeat, #fff; }
.scroll { display: flex; height: 16px; background: var(--dither); }
.arrowbtn, .thumb, .btn, .start, .task {
  background: var(--face);
  border: 1px solid;
  border-color: #fff var(--dark) var(--dark) #fff;
  box-shadow: inset -1px -1px var(--shadow);
}
.arrowbtn { display: grid; place-items: center; width: 16px; }
.arrowbtn.end { margin-left: auto; }
.arrowbtn svg { width: 8px; height: 8px; }
.thumb { width: 46%; }
.listpane { padding-top: 1px; }
.banner { height: 26px; background: var(--shadow); border-bottom: 1px solid var(--face); }
.listbox { flex: 1; display: flex; flex-direction: column; min-height: 0; }
.list { width: 100%; table-layout: fixed; border-collapse: separate; border-spacing: 0; margin-bottom: auto; }
.list th, .list td { height: 17px; padding: 0 0 0 6px; font-weight: normal; text-align: left; white-space: nowrap; overflow: hidden; }
.list th {
  background: var(--face);
  border: 1px solid;
  border-color: #fff var(--dark) var(--dark) #fff;
  box-shadow: inset -1px -1px var(--shadow);
  padding-left: 5px;
}
.desc { width: 121px; }
.status { display: flex; gap: 2px; margin-top: 1px; height: 19px; }
.cell { border: 1px solid; border-color: var(--shadow) #fff #fff var(--shadow); }
.grow { flex: 1; }
.mid { width: 130px; }
.small { width: 84px; }

/* Property sheet */
.sheet { padding: 9px 5px 6px 6px; }
.tabs { display: flex; align-items: flex-end; }
.tab {
  height: 17px;
  padding: 0 3px;
  border: 1px solid;
  border-color: #fff var(--dark) transparent #fff;
  border-bottom: 0;
  border-radius: 2px 2px 0 0;
  box-shadow: inset -1px 0 var(--shadow);
}
.tab + .tab { margin-left: 1px; }
.tab.active { position: relative; z-index: 1; height: 20px; padding: 0 7px 2px; margin-bottom: -1px; background: var(--face); }
.panel {
  min-height: 361px;
  padding: 11px 41px 10px 14px;
  border: 1px solid;
  border-color: #fff var(--dark) var(--dark) #fff;
  box-shadow: inset -1px -1px var(--shadow);
}
.head { display: flex; align-items: center; gap: 26px; padding-bottom: 11px; border-bottom: 1px solid var(--shadow); box-shadow: 0 1px #fff; }
.head svg { width: 32px; height: 34px; }
.field { display: flex; align-items: center; justify-content: space-between; margin-top: 14px; }
.panel input { height: 21px; padding: 0 2px; border: 1px solid; border-color: var(--shadow) #fff #fff var(--shadow); box-shadow: inset 1px 1px var(--dark); outline: 0; }
.field input { width: 171px; }
.stack { margin-top: 11px; display: grid; gap: 1px; }
.edit { position: relative; display: grid; }
.edit input { background: #fff; }
.caret { position: absolute; left: 3px; top: 4px; width: 1px; height: 13px; background: #000; }
.mode { margin-top: 13px; display: grid; gap: 3px; }
.mode.forest { margin-top: 38px; }
.actions { display: flex; justify-content: flex-end; gap: 6px; margin-top: 6px; }
.btn { width: 75px; height: 24px; }
.btn.default { outline: 1px solid #000; outline-offset: -1px; border-color: #000; box-shadow: inset 1px 1px #fff, inset -1px -1px var(--dark); }
.btn:disabled { color: var(--shadow); text-shadow: 1px 1px #fff; }

/* Taskbar */
.taskbar {
  display: flex;
  align-items: center;
  height: 30px;
  padding: 0 0 0 2px;
  background: var(--face);
  box-shadow: inset 0 1px var(--face), inset 0 2px #fff;
}
.start { display: flex; align-items: center; gap: 1px; height: 23px; width: 51px; padding-left: 1px; font-weight: bold; }
.grip { width: 2px; height: 20px; border-left: 1px solid var(--shadow); border-right: 1px solid #fff; margin: 0 8px; }
.grip.tight { margin: 0 3px; }
.quick { display: flex; align-items: center; gap: 6px; }
.quick .more { width: 20px; padding-bottom: 6px; font-weight: bold; font-size: 14px; }
.tasks { display: flex; flex: 1; gap: 3px; min-width: 0; }
.task { display: flex; align-items: center; gap: 3px; flex: 0 1 160px; height: 23px; padding: 0 4px; min-width: 0; white-space: nowrap; overflow: hidden; }
.task.current { background: var(--dither); border-color: var(--dark) #fff #fff var(--dark); box-shadow: inset 1px 1px var(--shadow); font-weight: bold; }
.grip.far { margin-left: 18px; }
.lang { width: 13px; height: 16px; background: var(--navy); color: #fff; }
.tray { display: flex; align-items: center; gap: 5px; height: 23px; margin-left: 4px; padding: 0 3px; border: 1px solid; border-color: var(--shadow) #fff #fff var(--shadow); }
.cpu { width: 12px; height: 12px; }
```
